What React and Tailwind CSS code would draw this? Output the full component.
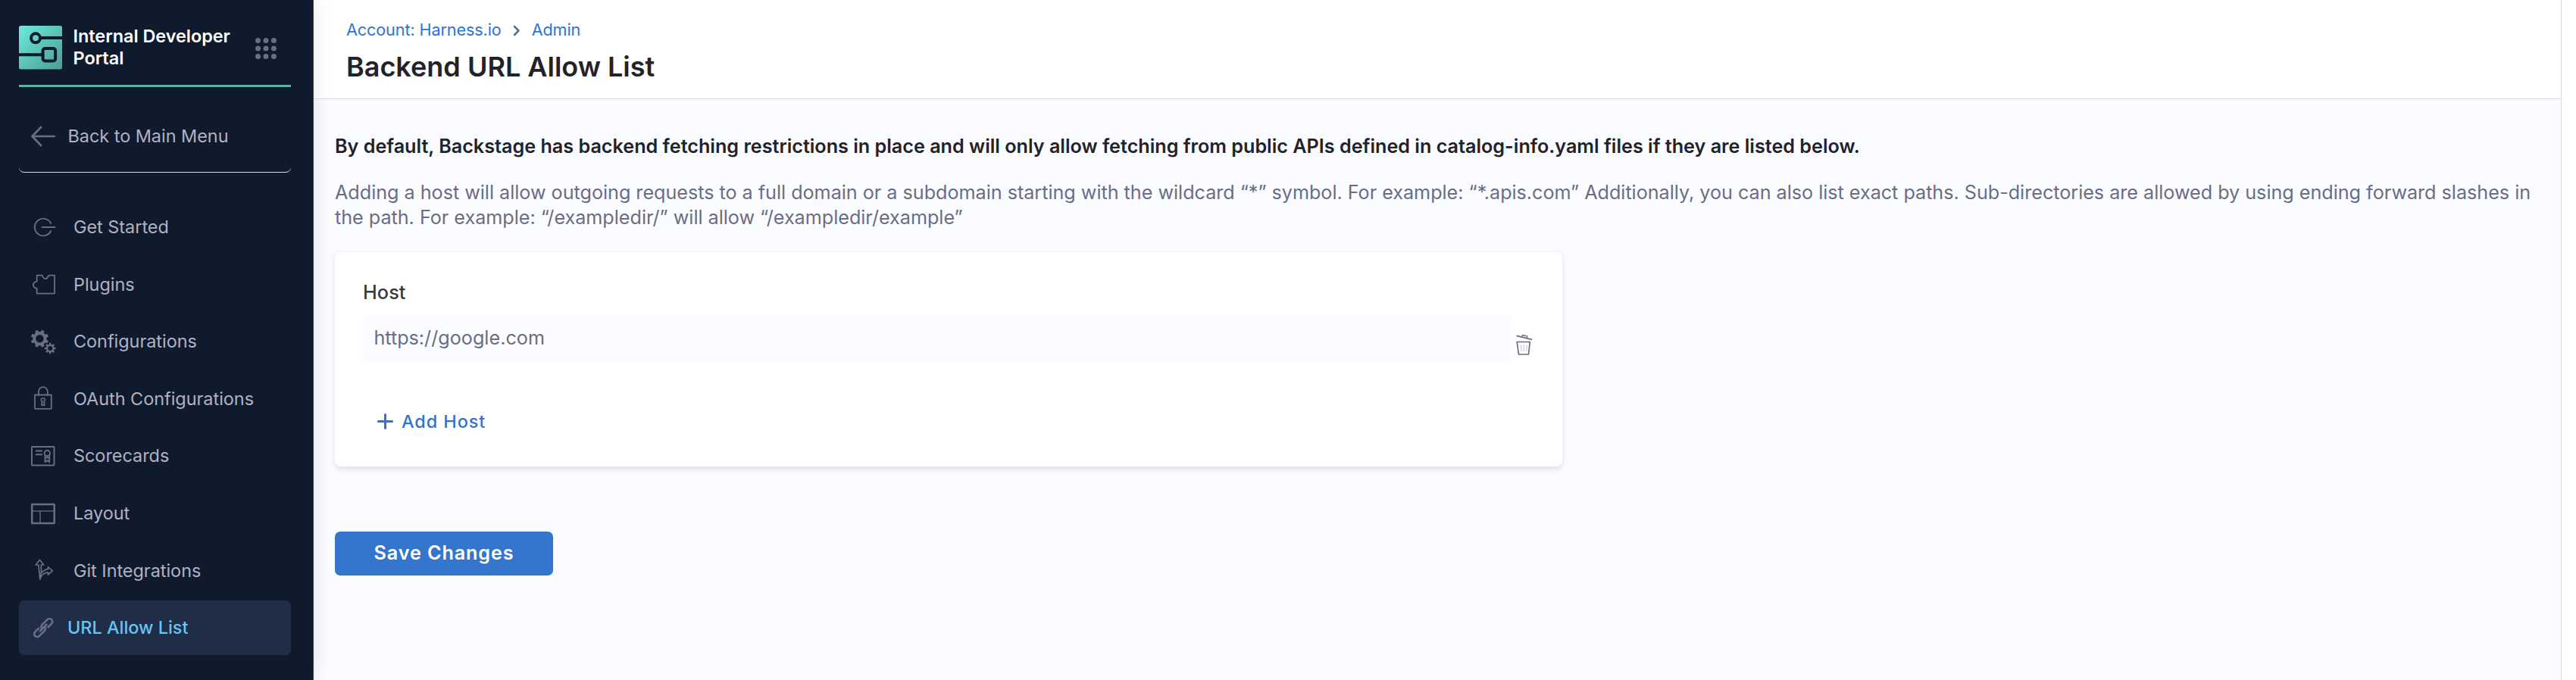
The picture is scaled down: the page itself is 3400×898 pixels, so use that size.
const GRAY = '#6b6d85';

function Logo() {
  return (
    <svg width="57" height="58" viewBox="0 0 57 58" fill="none" className="shrink-0">
      <defs>
        <linearGradient id="logo-fill" x1="0" y1="0" x2="57" y2="58" gradientUnits="userSpaceOnUse">
          <stop stopColor="#6de9dd" />
          <stop offset="1" stopColor="#4c9f91" />
        </linearGradient>
      </defs>
      <rect width="57" height="57.5" rx="2.5" fill="url(#logo-fill)" />
      <g stroke="#0f1b2d" strokeWidth="4">
        <circle cx="22" cy="16.3" r="6" />
        <path d="M28 16H57M0 38.2H31" />
        <rect x="31.6" y="30" width="16.5" height="16.5" rx="3" />
      </g>
    </svg>
  );
}

function AppGrid() {
  const stops = [3.5, 14, 24.4];
  return (
    <svg width="28" height="28" viewBox="0 0 28 28" fill={GRAY}>
      {stops.map((y) => stops.map((x) => <circle key={`${x}-${y}`} cx={x} cy={y} r="3.5" />))}
    </svg>
  );
}

function NavIcon({ children, strokeWidth = 2 }) {
  return (
    <svg
      width="36"
      height="36"
      viewBox="0 0 36 36"
      fill="none"
      stroke={GRAY}
      strokeWidth={strokeWidth}
      strokeLinecap="round"
      strokeLinejoin="round"
      className="shrink-0"
    >
      {children}
    </svg>
  );
}

function gearPath(cx, cy, outer, inner, hole, teeth, rotation) {
  const step = (Math.PI * 2) / teeth;
  const points = [];
  for (let i = 0; i < teeth; i += 1) {
    [[-0.3, inner], [-0.2, outer], [0.2, outer], [0.3, inner]].forEach(([offset, r]) => {
      const a = rotation + (i + offset) * step;
      points.push(`${(cx + Math.cos(a) * r).toFixed(2)},${(cy + Math.sin(a) * r).toFixed(2)}`);
    });
  }
  return `M${points.join('L')}ZM${cx - hole},${cy}a${hole},${hole} 0 1,0 ${2 * hole},0a${hole},${hole} 0 1,0 ${-2 * hole},0Z`;
}

const navItems = [
  {
    label: 'Get Started',
    icon: (
      <NavIcon strokeWidth={1.9}>
        <path d="M28.5 13.5A11.3 11.3 0 1 0 28.5 22.5" strokeLinecap="butt" />
        <path d="M16.5 18H33.5" />
      </NavIcon>
    ),
  },
  {
    label: 'Plugins',
    icon: (
      <NavIcon strokeWidth={1.8}>
        <path d="M9.7 6.7H16.5C17.2 7 17.5 11.2 20.9 11.2S24.6 7 25.2 6.7H33V30.6H9.7V24C7.5 23.7 4.9 22.3 4.9 19.3S7.5 14.9 9.7 14.6Z" />
      </NavIcon>
    ),
  },
  {
    label: 'Configurations',
    icon: (
      <NavIcon>
        <g fill={GRAY} stroke="none" fillRule="evenodd">
          <path d={gearPath(13.4, 14.2, 11.8, 9.2, 5.2, 8, Math.PI / 8)} />
          <path d={gearPath(27.2, 27, 7.4, 5.4, 3, 8, 0)} />
        </g>
      </NavIcon>
    ),
  },
  {
    label: 'OAuth Configurations',
    icon: (
      <NavIcon strokeWidth={1.8}>
        <rect x="7" y="13.5" width="21.8" height="18.3" rx="0.5" />
        <path d="M12 13.5V9a5.9 5.9 0 0 1 11.8 0V13.5" />
        <path d="M17.9 17.4a2.7 2.7 0 0 0-1.5 4.9l-0.4 5h3.8l-0.4-5a2.7 2.7 0 0 0-1.5-4.9Z" strokeWidth="1.5" />
        <path d="M17.9 20.5V26" strokeWidth="0.8" />
      </NavIcon>
    ),
  },
  {
    label: 'Scorecards',
    icon: (
      <NavIcon strokeWidth={1.9}>
        <rect x="3" y="6" width="29.5" height="24.5" rx="0.5" />
        <path d="M8.8 11.5H16M8.8 16.3H16" strokeWidth="2" />
        <circle cx="23.3" cy="14.5" r="3.7" />
        <path d="M20.5 17.5V26.2L23.3 24L26.2 26.2V17.5M20.5 21.5L23.3 20L26.2 21.5" strokeWidth="1.8" />
      </NavIcon>
    ),
  },
  {
    label: 'Layout',
    icon: (
      <NavIcon strokeWidth={2.5}>
        <rect x="3.2" y="6" width="29.5" height="25" rx="0.5" />
        <path d="M3.5 14.8H32.5M14 14.8V31" strokeWidth="1.3" />
      </NavIcon>
    ),
  },
  {
    label: 'Git Integrations',
    icon: (
      <NavIcon strokeWidth={1.7}>
        <path d="M13.4 4.4L18.8 11H15.4V21.6C18 18.5 21 17 24.4 16.6V13.8L30.3 18.8L24.4 24V20.8C20 21.2 15.5 23.5 13.8 29.8L11.8 11H8.2Z" />
        <path d="M13.8 29.8L15.4 21.6" />
      </NavIcon>
    ),
  },
];

function LinkIcon() {
  return (
    <NavIcon strokeWidth={2.6}>
      <g transform="translate(18.2 18) rotate(-45)">
        <path d="M-5 -3.9H-11.5A3.9 3.9 0 0 0 -11.5 3.9H-1.5A3.9 3.9 0 0 0 2.4 0H-6" />
        <path d="M5 3.9H11.5A3.9 3.9 0 0 0 11.5 -3.9H1.5A3.9 3.9 0 0 0 -2.4 0H6" />
      </g>
    </NavIcon>
  );
}

function TrashIcon() {
  return (
    <svg width="24" height="30" viewBox="0 0 24 30" fill="none" stroke={GRAY} strokeWidth="1.7" strokeLinejoin="round" className="shrink-0">
      <path d="M1.5 3.4L22 8.4" />
      <path d="M8.8 5L9.6 2.5L15.8 3.9L15.3 6.6" strokeWidth="1.4" />
      <path d="M2.2 11.5H19.3L17.5 28H4.5Z" />
      <path d="M7.5 15.5L8.2 24M11.3 15.5V24M15.3 15.5L14.7 24" stroke="#cfd0da" strokeWidth="1.4" />
    </svg>
  );
}

function Sidebar() {
  return (
    <aside className="relative z-10 flex w-[414px] shrink-0 flex-col border-r border-[#3b4453] bg-[#0f1b2d] pl-[25px] pr-[29px] text-[23.4px] text-[#b0b1c4] shadow-[0_0_24px_rgba(40,41,61,0.10)]">
      <header className="flex h-[115px] items-start border-b-3 border-[#5ab5a2] pt-[33px]">
        <div className="pt-px">
          <Logo />
        </div>
        <h2 className="ml-[14.5px] w-[222px] text-[23.4px] leading-[29px] font-semibold text-white">Internal Developer Portal</h2>
        <div className="ml-[18.5px] pt-[17px]">
          <AppGrid />
        </div>
      </header>

      <a className="flex h-[113px] items-center rounded-b-[7px] border-b border-[#d9dae5] pt-[17px] pl-[16px]">
        <svg width="32" height="28" viewBox="0 0 32 28" fill="none" stroke={GRAY} strokeWidth="2.6" strokeLinecap="round" strokeLinejoin="round">
          <path d="M13 2L1.5 14L13 26M1.5 14H30.7" />
        </svg>
        <span className="ml-[16.5px]">Back to Main Menu</span>
      </a>

      <nav className="mt-[35.6px] flex flex-col gap-[3.6px]">
        {navItems.map(({ label, icon }) => (
          <a key={label} className="flex h-[72px] items-center pl-[14px]">
            {icon}
            <span className="ml-[22px]">{label}</span>
          </a>
        ))}
        <a className="flex h-[72px] items-center rounded-[7px] bg-[#1f2d47] pl-[14px] font-medium text-[#67c4f3]">
          <LinkIcon />
          <span className="ml-[14px]">URL Allow List</span>
        </a>
      </nav>
    </aside>
  );
}

function PageHeader() {
  return (
    <header className="h-[131px] border-b border-[#d9dae5] bg-white pt-[25px] pl-[43px]">
      <div className="flex h-[28px] items-center text-[21.6px] tracking-[-0.1px] text-[#2e74d0]">
        <a>Account: Harness.io</a>
        <svg
          width="10"
          height="15"
          viewBox="0 0 10 15"
          fill="none"
          stroke="#5c7080"
          strokeWidth="2.6"
          strokeLinecap="round"
          strokeLinejoin="round"
          className="mx-[15px] mt-[2px]"
        >
          <path d="M2 2L7.5 7.5L2 13" />
        </svg>
        <a>Admin</a>
      </div>
      <h1 className="mt-[13px] text-[36px] leading-[44px] font-semibold text-[#22222a]">Backend URL Allow List</h1>
    </header>
  );
}

function HostCard() {
  return (
    <section className="mt-[29px] h-[283px] w-[1620px] rounded-[7px] bg-white px-[37px] pt-[38px] shadow-[0_0_3.6px_rgba(40,41,61,0.04),0_3.6px_7.2px_rgba(96,97,112,0.16)]">
      <div className="leading-[30px] font-medium tracking-[0.1px] text-[#383946]">Host</div>
      <div className="mt-[16px] flex h-[61px]">
        <div className="flex w-[1518px] items-center bg-[#fbfcff] pb-[2px] pl-[14.4px] text-[#6b6d85]">https://google.com</div>
        <div className="ml-[3px] pt-[23px]">
          <TrashIcon />
        </div>
      </div>
      <button className="mt-[63px] ml-[18px] flex h-[31px] items-center text-[23.4px] font-medium tracking-[0.95px] text-[#2e74d0]">
        <svg width="23" height="23" viewBox="0 0 23 23" fill="none" stroke="#2e74d0" strokeWidth="3" strokeLinecap="round">
          <path d="M11.5 2.4V20.6M2.4 11.5H20.6" />
        </svg>
        <span className="ml-[10px]">Add Host</span>
      </button>
    </section>
  );
}

export default function App() {
  return (
    <div className="flex h-[898px] overflow-hidden bg-white font-['Inter',sans-serif]">
      <Sidebar />
      <main className="flex min-w-0 flex-1 flex-col border-r border-[#d9dae5] bg-[#fbfcff] text-[25.2px]">
        <PageHeader />
        <div className="flex flex-col items-start pt-[46px] pr-[28px] pl-[28px]">
          <p className="leading-[32px] font-semibold tracking-[-0.012px] text-[#22222a]">
            By default, Backstage has backend fetching restrictions in place and will only allow fetching from public APIs defined in catalog-info.yaml files if they are listed below.
          </p>
          <p className="mt-[29.4px] leading-[32.8px] tracking-[-0.028px] text-[#6b6d85]">
            Adding a host will allow outgoing requests to a full domain or a subdomain starting with the wildcard “*” symbol. For example: “*.apis.com” Additionally, you can also list exact paths. Sub-directories are allowed by using ending forward slashes in the path. For example: “/exampledir/” will allow “/exampledir/example”
          </p>
          <HostCard />
          <button className="mt-[86px] h-[58px] w-[288px] rounded-[7px] bg-[#3476cd] text-center font-semibold tracking-[0.9px] text-white">Save Changes</button>
        </div>
      </main>
      <div className="w-[19px] shrink-0 bg-white" />
    </div>
  );
}
